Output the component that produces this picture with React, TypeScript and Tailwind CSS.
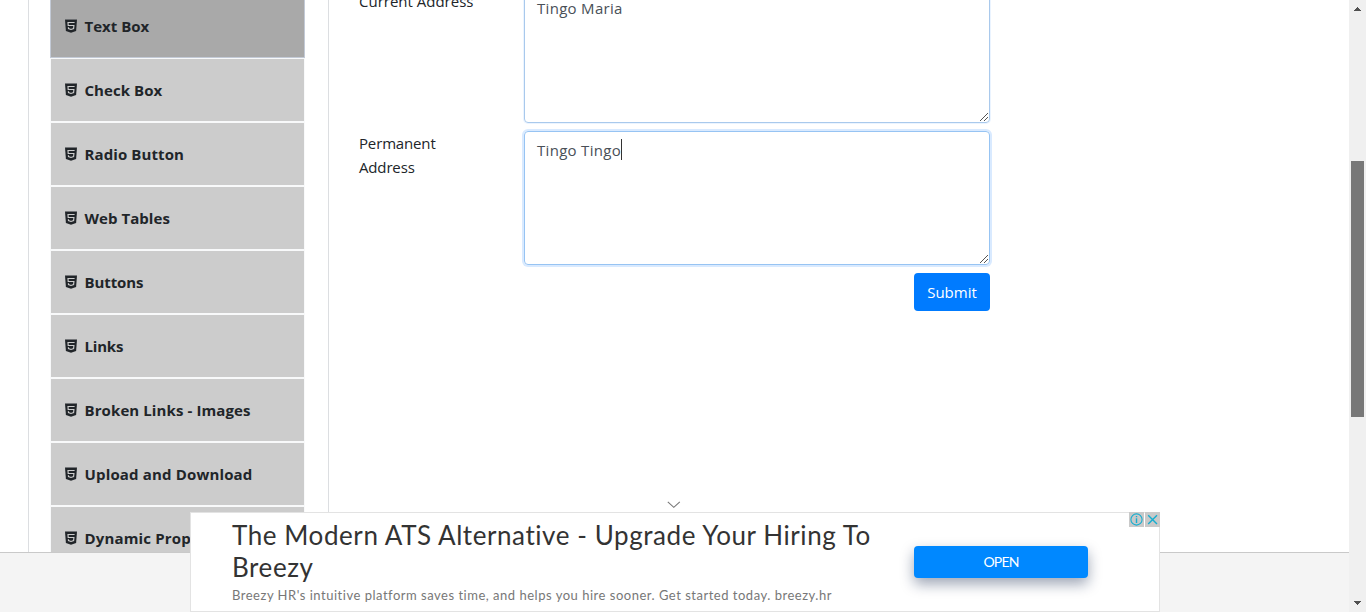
type Item = { label: string; spacing: string; active?: boolean };

const items: Item[] = [
  { label: "Text Box", spacing: "tracking-[0px]", active: true },
  { label: "Check Box", spacing: "tracking-[0.06px]" },
  { label: "Radio Button", spacing: "tracking-[0.1px]" },
  { label: "Web Tables", spacing: "tracking-[0.05px]" },
  { label: "Buttons", spacing: "tracking-[-0.1px]" },
  { label: "Links", spacing: "tracking-[-0.2px]" },
  { label: "Broken Links - Images", spacing: "tracking-[0.1px]" },
  { label: "Upload and Download", spacing: "tracking-[0.16px]" },
  { label: "Dynamic Properties", spacing: "tracking-[0.16px]" },
];

function Html5Icon() {
  return (
    <svg className="-mt-px mr-[7.5px] h-[14px] w-3 shrink-0" viewBox="0 0 12 14" fill="none">
      <path d="M0 0.4H12L11.1 12L6 13.7L0.9 12Z" fill="#212529" />
      <path d="M0 0.4H12L11.9 1.1H0.1Z" fill="#74777a" />
      <path d="M9.6 3.5H3L3.2 6.5H8.9L8.6 9.6L6 10.5L3.5 9.6L3.4 8.3" stroke="#cccccc" strokeWidth="1.15" />
    </svg>
  );
}

function Sidebar() {
  return (
    <nav className="-mt-1.5 ml-[21px] w-[255px] shrink-0">
      {items.map((item) => (
        <div
          key={item.label}
          className={
            item.active
              ? "flex h-16 items-center border border-[#c3cad6] bg-[#a9a9a9] pl-3.5"
              : "flex h-16 items-center border border-[#f8f9fa] bg-[#cccccc] pl-3.5"
          }
        >
          <Html5Icon />
          <span className={`text-[15px] leading-6 font-bold whitespace-nowrap text-[#212529] ${item.spacing}`}>{item.label}</span>
        </div>
      ))}
    </nav>
  );
}

function Grip() {
  return (
    <svg className="absolute right-px bottom-px" width="8" height="8" viewBox="0 0 8 8" shapeRendering="crispEdges" stroke="#555" strokeWidth="1">
      <path d="M0 7.5h1M1 6.5h1M2 5.5h1M3 4.5h1M4 3.5h1M5 2.5h1M6 1.5h1M7 .5h1M4 7.5h1M5 6.5h1M6 5.5h1M7 4.5h1" />
    </svg>
  );
}

function Form() {
  return (
    <section className="ml-[30px] w-[631px] text-[15px] leading-6 text-[#212529]">
      <div className="-mt-[11px] flex h-[134px] justify-between">
        <span className="whitespace-nowrap">Current Address</span>
        <div className="relative w-[466px] rounded-b-[4px] border border-[#a9c9ec] px-3 py-[6px] tracking-[0.3px] text-[#495057] shadow-[0_0_0_1px_#ebf4ff]">
          Tingo Maria
          <Grip />
        </div>
      </div>
      <div className="mt-2 flex h-[134px] justify-between">
        <span className="w-[120px] tracking-[-0.15px]">Permanent Address</span>
        <div className="relative flex w-[466px] items-start rounded-[4px] border border-[#97c4f3] px-3 py-[6px] tracking-[0.3px] text-[#495057] shadow-[0_0_0_2px_#d9eaff]">
          <span className="w-[84px] whitespace-nowrap">Tingo Tingo</span>
          <i className="mt-px h-[21px] w-px bg-[#333]" />
          <Grip />
        </div>
      </div>
      <div className="mt-2 flex justify-end">
        <button className="h-[38px] w-[76px] rounded-[4px] bg-[#007bff] text-white">Submit</button>
      </div>
    </section>
  );
}

function Ad() {
  return (
    <aside className="absolute top-[512px] left-[190px] flex h-[100px] w-[970px] border border-[#e3e3e3] bg-white">
      <div className="ml-[41px] w-[682px] pt-[6px] font-[Lato,sans-serif]">
        <h2 className="text-[26px] leading-8 tracking-[0.57px] whitespace-nowrap text-[#333]">
          The Modern ATS Alternative - Upgrade Your Hiring To
          <br />
          Breezy
        </h2>
        <p className="mt-[4px] text-[13px] leading-4 tracking-[0.51px] whitespace-nowrap text-[#777]">
          Breezy HR's intuitive platform saves time, and helps you hire sooner. Get started today. breezy.hr
        </p>
      </div>
      <button className="mt-[33px] h-8 w-[174px] rounded-[4px] bg-[#0088ff] pb-0.5 font-[Lato,sans-serif] text-[14px] tracking-[-0.8px] text-white shadow-[0_6px_14px_#0a1e4666]">
        OPEN
      </button>
      <svg className="absolute -top-px -right-px" width="31" height="15" viewBox="0 0 31 15" fill="none" stroke="#16aed0">
        <path d="M0 0H15V15H0ZM16 0H31V15H16Z" fill="#c9c9c9" stroke="none" />
        <circle cx="7.5" cy="7.5" r="5.6" strokeWidth="1.1" />
        <path d="M7.5 6.3V11M7.5 3.9V5.2" strokeWidth="1.4" />
        <path d="M19.2 3.2L28 12M28 3.2L19.2 12" strokeWidth="1.4" />
      </svg>
      <svg className="absolute -top-[12px] left-[476px]" width="14" height="8" viewBox="0 0 14 8" fill="none" stroke="#777" strokeWidth="1.1">
        <path d="M0.8 0.9L6.8 6.3L12.8 0.9" />
      </svg>
    </aside>
  );
}

function Scrollbar() {
  return (
    <div className="flex w-[17px] flex-col items-center bg-[#f0f0f0]">
      <svg className="mt-[7px]" width="7" height="4" viewBox="0 0 7 4" shapeRendering="crispEdges" fill="#505050">
        <path d="M3 0h1v1h1v1h1v1h1v1H0V3h1V2h1V1h1z" />
      </svg>
      <div className="mt-[150px] h-64 w-[13px] bg-[#787878]" />
      <svg className="mt-[184px]" width="7" height="4" viewBox="0 0 7 4" shapeRendering="crispEdges" fill="#505050">
        <path d="M0 0h7v1H6v1H5v1H4v1H3V3H2V2H1V1H0z" />
      </svg>
    </div>
  );
}

export default function App() {
  return (
    <div className="flex h-[612px] w-[1366px] overflow-hidden bg-white font-['Open_Sans',sans-serif]">
      <main className="relative flex w-[1349px] flex-col">
        <div className="flex h-[552px] overflow-hidden pl-[28px]">
          <div className="flex w-[301px] border-x border-[#dcdee1]">
            <Sidebar />
          </div>
          <Form />
        </div>
        <footer className="h-[60px] border-t border-[#c9c9c9] bg-[#f4f4f4]" />
        <Ad />
      </main>
      <Scrollbar />
    </div>
  );
}
